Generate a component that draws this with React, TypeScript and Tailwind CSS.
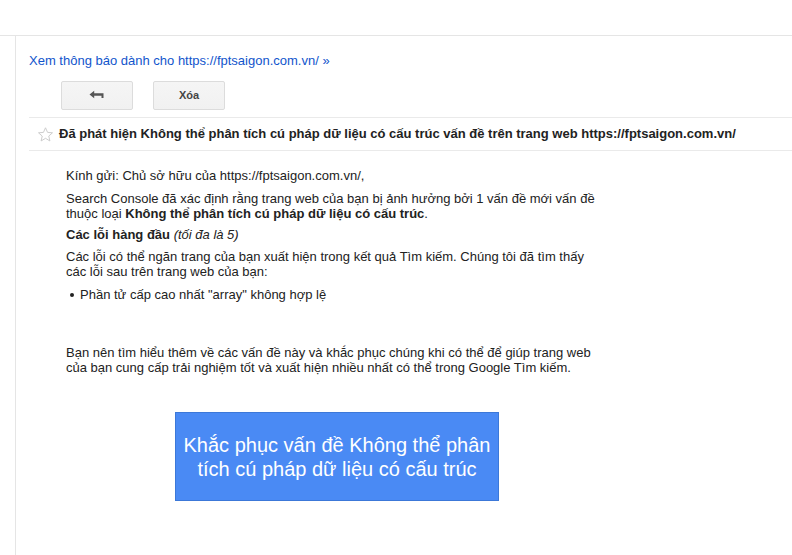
export default function App() {
  return (
    <div className="w-[792px] h-[555px] bg-white overflow-hidden font-['Liberation_Sans',Arial,sans-serif] text-[13px] text-[#222]">
      <div className="h-[35px]" />
      <div className="flex h-[520px] border-t border-[#e5e5e5]">
        <div className="w-[16px] shrink-0 border-r border-[#e5e5e5]" />
        <div className="flex-1 pl-[13px]">
          <div className="pt-[17px] text-[#1155cc] leading-[16px]">
            Xem thông báo dành cho https://fptsaigon.com.vn/ »
          </div>
          <div className="flex gap-[20px] pl-[32px] pt-[12px]">
            <button className="w-[72px] h-[29px] flex items-center justify-center rounded-[2px] border border-[#dcdcdc] bg-gradient-to-b from-[#f5f5f5] to-[#f1f1f1]">
              <svg width="16" height="11" viewBox="0 0 16 11">
                <path d="M0.5 4.5 L5.2 0.8 L5.2 3.3 L14.5 3.3 L14.5 8 L12.5 8 L12.5 5.7 L5.2 5.7 L5.2 8.2 Z" fill="#555" />
              </svg>
            </button>
            <button className="w-[72px] h-[29px] flex items-center justify-center rounded-[2px] border border-[#dcdcdc] bg-gradient-to-b from-[#f5f5f5] to-[#f1f1f1] text-[11px] font-bold text-[#444]">
              Xóa
            </button>
          </div>
          <div className="mt-[7px] border-t border-b border-[#eaeaea] h-[34px] flex items-center gap-[5px] pl-[8px]">
            <svg width="17" height="17" viewBox="0 0 24 24">
              <path
                d="M12 2.5 L14.9 9 L21.9 9.6 L16.6 14.2 L18.2 21.1 L12 17.4 L5.8 21.1 L7.4 14.2 L2.1 9.6 L9.1 9 Z"
                fill="none"
                stroke="#c8c8c8"
                strokeWidth="1.3"
                strokeLinejoin="round"
              />
            </svg>
            <span className="font-bold text-[13px] text-[#222]">
              Đã phát hiện Không thể phân tích cú pháp dữ liệu có cấu trúc vấn đề trên trang web https://fptsaigon.com.vn/
            </span>
          </div>
          <div className="pl-[37px] pt-[17px] w-[575px] leading-[15px] text-[13px]">
            <p>Kính gửi: Chủ sở hữu của https://fptsaigon.com.vn/,</p>
            <p className="mt-[8px]">
              Search Console đã xác định rằng trang web của bạn bị ảnh hưởng bởi 1 vấn đề mới vấn đề thuộc loại{' '}
              <b>Không thể phân tích cú pháp dữ liệu có cấu trúc</b>.
            </p>
            <p className="mt-[6px]">
              <b>Các lỗi hàng đầu</b> <i>(tối đa là 5)</i>
            </p>
            <p className="mt-[7px]">
              Các lỗi có thể ngăn trang của bạn xuất hiện trong kết quả Tìm kiếm. Chúng tôi đã tìm thấy các lỗi sau trên trang web của bạn:
            </p>
            <ul className="mt-[8px] pl-[4px]">
              <li className="flex items-center gap-[6px]">
                <span className="w-[4px] h-[4px] rounded-full bg-[#222]" />
                Phần tử cấp cao nhất "array" không hợp lệ
              </li>
            </ul>
            <p className="mt-[43px]">
              Bạn nên tìm hiểu thêm về các vấn đề này và khắc phục chúng khi có thể để giúp trang web của bạn cung cấp trải nghiệm tốt và xuất hiện nhiều nhất có thể trong Google Tìm kiếm.
            </p>
          </div>
          <div className="pl-[146px] pt-[37px]">
            <div className="w-[324px] h-[89px] flex items-center justify-center bg-[#4a8af4] border border-[#3c78d8] text-white text-[20px] leading-[24px] text-center px-[6px]">
              Khắc phục vấn đề Không thể phân tích cú pháp dữ liệu có cấu trúc
            </div>
          </div>
        </div>
      </div>
    </div>
  )
}
